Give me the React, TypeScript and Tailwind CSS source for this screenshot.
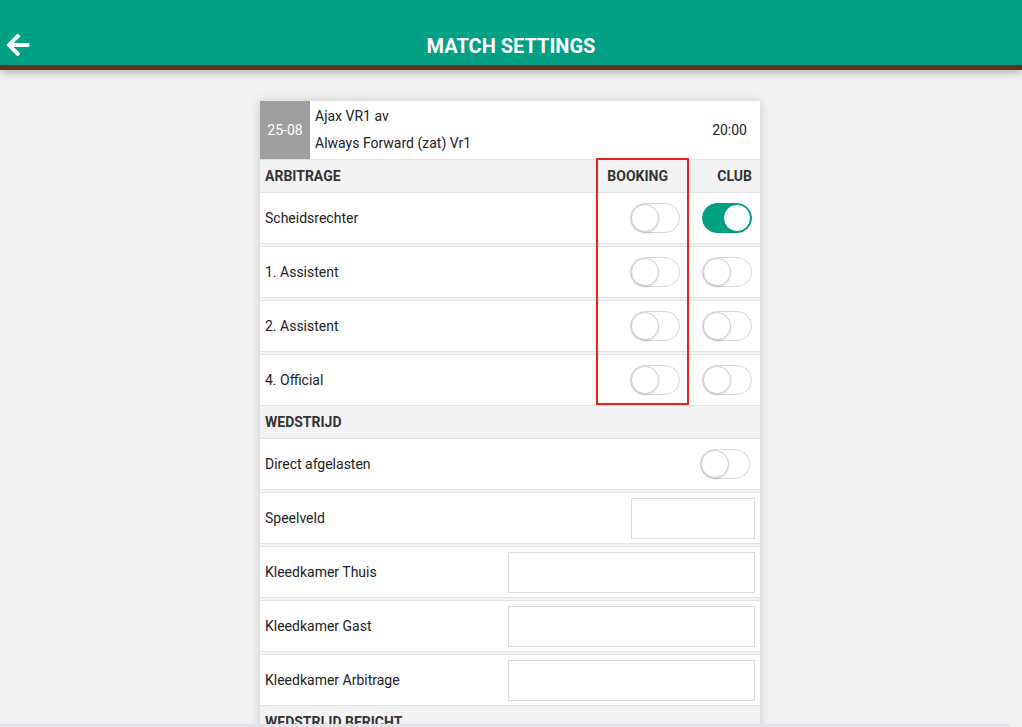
import React, { useState } from "react";
import { FaArrowLeft } from "react-icons/fa";

const Toggle: React.FC<{ on: boolean; onClick: () => void }> = ({ on, onClick }) => (
  <button
    type="button"
    onClick={onClick}
    className={`relative w-[50px] h-[30px] rounded-full border ${
      on ? "bg-[#00a185] border-[#00a185]" : "bg-white border-[#d4d4d4]"
    }`}
  >
    <span
      className={`absolute top-0 w-[28px] h-[28px] rounded-full bg-white border ${
        on ? "right-0 border-[#00a185]" : "left-0 border-[#cfcfcf]"
      } shadow-[0_1px_2px_rgba(0,0,0,0.15)]`}
    />
  </button>
);

const SectionHeader: React.FC<{ title: string; children?: React.ReactNode }> = ({ title, children }) => (
  <div className="flex items-center h-[33px] bg-[#f3f3f3] border-b border-[#e2e2e2] text-[14px] font-bold text-[#333]">
    <div className="flex-1 pl-[5px]">{title}</div>
    {children}
  </div>
);

const Row: React.FC<{ label: string; first?: boolean; children?: React.ReactNode }> = ({
  label,
  first,
  children,
}) => (
  <div
    className={`flex items-center h-[51px] bg-white border-b border-[#e2e2e2] ${
      first ? "" : "mt-[2px] border-t h-[52px]"
    }`}
  >
    <div className="flex-1 pl-[5px] text-[14px] text-[#222]">{label}</div>
    {children}
  </div>
);

const App: React.FC = () => {
  const [booking, setBooking] = useState([false, false, false, false]);
  const [club, setClub] = useState([true, false, false, false]);
  const [afgelasten, setAfgelasten] = useState(false);

  const roles = ["Scheidsrechter", "1. Assistent", "2. Assistent", "4. Official"];

  const flip = (arr: boolean[], set: (v: boolean[]) => void, i: number) => {
    const next = [...arr];
    next[i] = !next[i];
    set(next);
  };

  return (
    <div className="h-[727px] overflow-hidden bg-[#f3f3f3] font-['Roboto',sans-serif]">
      <header className="relative z-10 bg-[#00a185] pt-[20px] border-b-[5px] border-[#6b2e19] shadow-[0_3px_8px_rgba(0,0,0,0.25)]">
        <div className="relative flex items-center justify-center h-[45px]">
          <button type="button" className="absolute left-[5px] top-[12px] text-white">
            <FaArrowLeft className="w-[26px] h-[26px]" />
          </button>
          <h1 className="text-white text-[20px] font-bold mt-[6px]">MATCH SETTINGS</h1>
        </div>
      </header>

      <div className="pt-[31px] pr-[2px]">
        <div className="relative w-[500px] mx-auto bg-[#f3f3f3] shadow-[0_0_10px_rgba(0,0,0,0.18)]">
          <div className="flex h-[59px] bg-white border-b border-[#e2e2e2]">
            <div className="w-[50px] flex items-center justify-center bg-[#9e9e9e] text-white text-[14px]">
              25-08
            </div>
            <div className="flex-1 flex flex-col justify-between pl-[5px] py-[5px] text-[14px] text-[#222]">
              <span>Ajax VR1 av</span>
              <span>Always Forward (zat) Vr1</span>
            </div>
            <div className="flex items-center pr-[13px] text-[14px] text-[#222]">20:00</div>
          </div>

          <SectionHeader title="ARBITRAGE">
            <div className="w-[92px] text-right pr-[20px]">BOOKING</div>
            <div className="w-[72px] text-right pr-[8px]">CLUB</div>
          </SectionHeader>

          {roles.map((r, i) => (
            <Row key={r} label={r} first={i === 0}>
              <div className="w-[92px] flex justify-end pr-[8px]">
                <Toggle on={booking[i]} onClick={() => flip(booking, setBooking, i)} />
              </div>
              <div className="w-[72px] flex justify-end pr-[8px]">
                <Toggle on={club[i]} onClick={() => flip(club, setClub, i)} />
              </div>
            </Row>
          ))}

          <SectionHeader title="WEDSTRIJD" />
          <Row label="Direct afgelasten" first>
            <div className="pr-[10px] flex">
              <Toggle on={afgelasten} onClick={() => setAfgelasten(!afgelasten)} />
            </div>
          </Row>
          <Row label="Speelveld">
            <input className="w-[124px] h-[41px] mr-[5px] border border-[#dcdcdc] bg-white outline-none" />
          </Row>
          <Row label="Kleedkamer Thuis">
            <input className="w-[247px] h-[41px] mr-[5px] border border-[#dcdcdc] bg-white outline-none" />
          </Row>
          <Row label="Kleedkamer Gast">
            <input className="w-[247px] h-[41px] mr-[5px] border border-[#dcdcdc] bg-white outline-none" />
          </Row>
          <Row label="Kleedkamer Arbitrage">
            <input className="w-[247px] h-[41px] mr-[5px] border border-[#dcdcdc] bg-white outline-none" />
          </Row>
          <SectionHeader title="WEDSTRIJD BERICHT" />
          <div className="h-[60px] bg-white" />

          <div className="absolute left-[336px] top-[57px] w-[93px] h-[247px] border-2 border-[#e5231f] pointer-events-none" />
        </div>
      </div>

      <div className="fixed left-0 bottom-0 right-[12px] h-[3px] bg-[#e3e3e8] rounded-r-full" />
    </div>
  );
};

export default App;
